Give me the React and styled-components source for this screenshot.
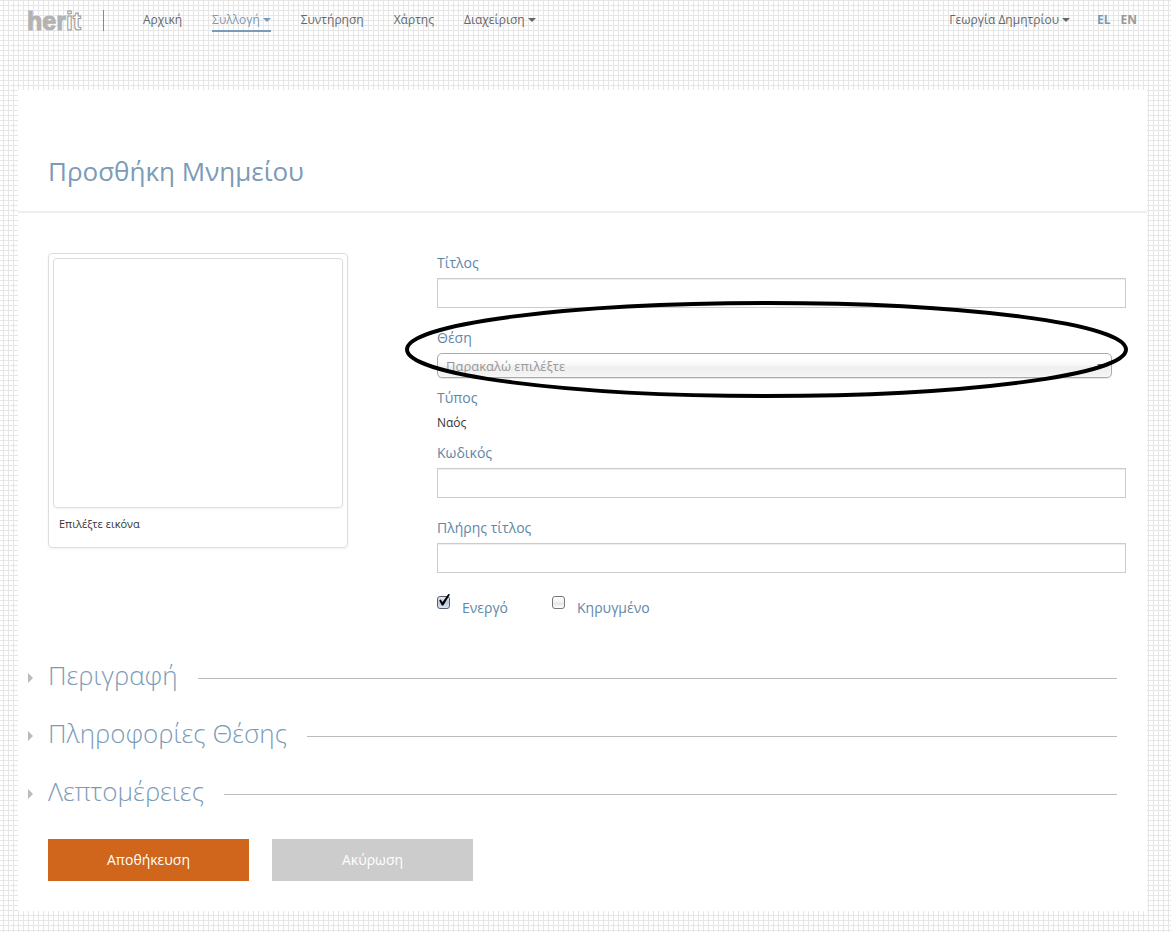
import React from "react";
import styled, { createGlobalStyle } from "styled-components";

const GlobalStyle = createGlobalStyle`
  *, *::before, *::after { box-sizing: border-box; }
  body {
    margin: 0;
    font-family: "Open Sans", "Noto Sans", sans-serif;
    font-size: 12px;
    line-height: 20px;
    color: #333;
    background-color: #fff;
    background-image:
      linear-gradient(#e6e6e6 1px, transparent 1px),
      linear-gradient(90deg, #e6e6e6 1px, transparent 1px);
    background-size: 5px 5px;
    background-position: 0 0, 3px 0;
  }
`;

const Page = styled.div`
  padding: 0 24px 21px 18px;
`;

const Header = styled.header`
  display: flex;
  align-items: flex-start;
  height: 90px;
  padding: 10px 10px 0;
`;

const Brand = styled.a`
  display: block;
  height: 21px;
  padding-right: 22px;
  border-right: 1px solid #888;
`;

const Nav = styled.nav`
  display: flex;
  gap: 30px;
  margin-left: 39px;
  flex: 1;
`;

const NavLink = styled.a`
  display: flex;
  align-items: center;
  gap: 3px;
  height: 22px;
  padding-bottom: 1px;
  color: ${(p) => (p.$active ? "#7b9bb8" : "#666")};
  border-bottom: 2px solid ${(p) => (p.$active ? "#7b9bb8" : "transparent")};
  text-decoration: none;
  white-space: nowrap;
`;

const Caret = styled.span`
  border: 4px solid transparent;
  border-top-color: currentColor;
  border-bottom: 0;
`;

const Languages = styled.div`
  display: flex;
  gap: 10px;
  margin-left: 27px;
`;

const Language = styled.a`
  color: ${(p) => (p.$active ? "#7b9bb8" : "#999")};
  font-weight: 700;
  text-decoration: none;
`;

const Panel = styled.main`
  background: #fff;
  padding-bottom: 30px;
`;

const TitleBar = styled.div`
  padding: 61px 30px 20px;
  border-bottom: 2px solid #eee;
`;

const Title = styled.h1`
  margin: 0;
  font-size: 26px;
  line-height: 40px;
  font-weight: 400;
  color: #7b9bb8;
`;

const Columns = styled.div`
  display: flex;
  gap: 89px;
  padding: 40px 21px 40px 30px;
`;

const Thumbnail = styled.div`
  align-self: flex-start;
  flex: none;
  width: 300px;
  height: 295px;
  padding: 4px;
  border: 1px solid #ddd;
  border-radius: 4px;
  box-shadow: 0 1px 3px rgba(0, 0, 0, 0.055);
`;

const Preview = styled.div`
  height: 250px;
  border: 1px solid #ddd;
  border-radius: 4px;
  box-shadow: 0 1px 3px rgba(0, 0, 0, 0.055);
`;

const Caption = styled.span`
  display: block;
  padding: 6px;
  font-size: 11px;
`;

const Fields = styled.div`
  position: relative;
  flex: 1;
  min-width: 0;
`;

const Field = styled.div`
  display: flex;
  flex-direction: column;
  gap: 5px;
  margin-bottom: ${(p) => (p.$tight ? 10 : 20)}px;
`;

const Label = styled.label`
  font-size: 14px;
  line-height: 20px;
  color: #5f86a8;
`;

const Value = styled.output`
  display: block;
`;

const TextInput = styled.input`
  width: 100%;
  height: 30px;
  padding: 4px 6px;
  border: 1px solid #ccc;
  background: #fff;
  box-shadow: inset 0 1px 1px rgba(0, 0, 0, 0.075);
  font: inherit;
`;

const SelectBox = styled.div`
  display: grid;
  align-items: center;
  margin-right: 14px;
  color: #666;
  & > * { grid-area: 1 / 1; }
  & > ${Caret} { justify-self: end; margin-right: 7px; pointer-events: none; }
`;

const Select = styled.select`
  appearance: none;
  width: 100%;
  height: 25px;
  padding: 0 24px 0 8px;
  border: 1px solid #aaa;
  border-radius: 5px;
  background: linear-gradient(#fff 20%, #f6f6f6 50%, #eee 52%, #f4f4f4 100%);
  box-shadow: 0 0 3px #fff inset, 0 1px 1px rgba(0, 0, 0, 0.1);
  color: #999;
  font-family: inherit;
  font-size: 13px;
`;

const Checks = styled.div`
  display: flex;
  gap: 44px;
  padding-top: 3px;
`;

const Check = styled.div`
  display: flex;
  align-items: flex-start;
  gap: 12px;
  & > ${Label} { padding-top: 2px; }
`;

const CheckControl = styled.span`
  display: grid;
  width: 13px;
  height: 13px;
  & > * { grid-area: 1 / 1; }
  & > svg { overflow: visible; pointer-events: none; visibility: hidden; }
  & > input:checked + svg { visibility: visible; }
`;

const Checkbox = styled.input`
  appearance: none;
  width: 13px;
  height: 13px;
  margin: 0;
  border: 1px solid #777;
  border-radius: 3px;
  background: linear-gradient(#fff, #f0f0f0 50%, #e4e4e4 55%, #fff);
  &:checked {
    border-color: #555f70;
    background: linear-gradient(#e4ebf4, #bccbdd 50%, #dae5ef);
  }
`;

const Marker = styled.svg`
  position: absolute;
  top: 48px;
  left: -32px;
  width: calc(100% + 34px);
  height: 97px;
  pointer-events: none;
`;

const Sections = styled.div`
  display: flex;
  flex-direction: column;
  gap: 18px;
  padding: 0 30px 0 10px;
`;

const SectionHeader = styled.button`
  display: flex;
  align-items: center;
  width: 100%;
  height: 40px;
  padding: 0;
  border: 0;
  background: none;
  color: #7b9bb8;
  font-family: inherit;
  font-size: 26px;
  line-height: 34px;
  font-weight: 300;
  text-align: left;

  &::before {
    content: "";
    margin-right: 15px;
    border: 5px solid transparent;
    border-left-color: #bbb;
    border-right: 0;
  }
  &::after {
    content: "";
    flex: 1;
    height: 1px;
    margin-left: 20px;
    background: #bbb;
  }
`;

const SectionTitle = styled.span`
  padding-bottom: 6px;
`;

const Actions = styled.div`
  display: flex;
  gap: 23px;
  padding: 25px 30px 0;
`;

const Button = styled.button`
  width: 201px;
  height: 42px;
  padding: 0 6px 2px;
  border: 0;
  background: ${(p) => (p.$primary ? "#d0661b" : "#ccc")};
  color: #fff;
  font-family: inherit;
  font-size: 14px;
`;

function Logo() {
  return (
    <svg width="53" height="21" viewBox="0 0 53 21" aria-label="herit" fontFamily="Liberation Sans, sans-serif" fontWeight="700" fontSize="25" overflow="visible">
      <text x="-1" y="20" fill="#b3b3b3" stroke="#b3b3b3" strokeWidth="1">
        her<tspan fill="#fff" stroke="#999">it</tspan>
      </text>
    </svg>
  );
}

function TextField({ id, label }) {
  return (
    <Field>
      <Label htmlFor={id}>{label}</Label>
      <TextInput id={id} type="text" />
    </Field>
  );
}

function CheckField({ id, label, checked }) {
  return (
    <Check>
      <CheckControl>
        <Checkbox id={id} type="checkbox" defaultChecked={checked} />
        <svg width="13" height="13" viewBox="0 0 13 13">
          <path d="M2.2 4.2 3.8 3.6 5.4 6.2 11.3-2 13-1.6 6.3 9.4 4.8 9.4Z" fill="#000" />
        </svg>
      </CheckControl>
      <Label htmlFor={id}>{label}</Label>
    </Check>
  );
}

const sections = ["Περιγραφή", "Πληροφορίες Θέσης", "Λεπτομέρειες"];

export default function App() {
  return (
    <>
      <GlobalStyle />
      <Page>
        <Header>
          <Brand href="#"><Logo /></Brand>
          <Nav>
            <NavLink href="#">Αρχική</NavLink>
            <NavLink href="#" $active>Συλλογή <Caret /></NavLink>
            <NavLink href="#">Συντήρηση</NavLink>
            <NavLink href="#">Χάρτης</NavLink>
            <NavLink href="#">Διαχείριση <Caret /></NavLink>
          </Nav>
          <NavLink href="#">Γεωργία Δημητρίου <Caret /></NavLink>
          <Languages>
            <Language href="#" $active>EL</Language>
            <Language href="#">EN</Language>
          </Languages>
        </Header>
        <Panel>
          <TitleBar><Title>Προσθήκη Μνημείου</Title></TitleBar>
          <form onSubmit={(e) => e.preventDefault()}>
            <Columns>
              <Thumbnail>
                <Preview />
                <Caption>Επιλέξτε εικόνα</Caption>
              </Thumbnail>
              <Fields>
                <TextField id="title" label="Τίτλος" />
                <Field $tight>
                  <Label htmlFor="place">Θέση</Label>
                  <SelectBox>
                    <Select id="place"><option>Παρακαλώ επιλέξτε</option></Select>
                    <Caret />
                  </SelectBox>
                </Field>
                <Field $tight>
                  <Label htmlFor="type">Τύπος</Label>
                  <Value id="type">Ναός</Value>
                </Field>
                <TextField id="code" label="Κωδικός" />
                <TextField id="full-title" label="Πλήρης τίτλος" />
                <Checks>
                  <CheckField id="active" label="Ενεργό" checked />
                  <CheckField id="listed" label="Κηρυγμένο" />
                </Checks>
                <Marker viewBox="0 0 723 97" preserveAspectRatio="none">
                  <ellipse cx="361.5" cy="48.5" rx="359.5" ry="46.5" fill="none" stroke="#000" strokeWidth="4" />
                </Marker>
              </Fields>
            </Columns>
            <Sections>
              {sections.map((name) => (
                <SectionHeader key={name} type="button">
                  <SectionTitle>{name}</SectionTitle>
                </SectionHeader>
              ))}
            </Sections>
            <Actions>
              <Button type="submit" $primary>Αποθήκευση</Button>
              <Button type="button">Ακύρωση</Button>
            </Actions>
          </form>
        </Panel>
      </Page>
    </>
  );
}
